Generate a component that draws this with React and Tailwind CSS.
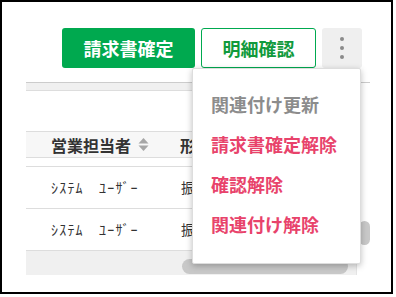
import React from "react";

const jp = { fontFamily: '"Noto Sans CJK JP", "Noto Sans", sans-serif' };

function SortIcon() {
  return (
    <svg width="11" height="15" viewBox="0 0 11 15" className="ml-[7px]">
      <path d="M5.5 1 L10.5 6.5 H0.5 Z" fill="#a6a6a6" />
      <path d="M5.5 14 L10.5 8.5 H0.5 Z" fill="#a6a6a6" />
    </svg>
  );
}

function Row({ name, col2 }) {
  return (
    <div className="h-[42px] flex items-center border-b border-[#dddddd] text-[14px] text-[#333]">
      <div className="w-[154px] pl-[25px] tracking-[1.2px]">{name}</div>
      <div className="pl-[1px]">{col2}</div>
    </div>
  );
}

export default function App() {
  const menu = [
    { label: "関連付け更新", color: "text-[#8c8c8c]" },
    { label: "請求書確定解除", color: "text-[#e8436b]" },
    { label: "確認解除", color: "text-[#e8436b]" },
    { label: "関連付け解除", color: "text-[#e8436b]" },
  ];

  return (
    <div className="w-[396px] h-[297px] bg-white" style={jp}>
      <div className="relative w-[393px] h-[294px] border-2 border-black bg-white">
        {/* toolbar */}
        <div className="flex justify-end gap-[6px] pt-[26px] pr-[29px]">
          <button className="w-[133px] h-[40px] rounded-[3px] bg-[#00a94f] text-white text-[18px] font-bold">
            請求書確定
          </button>
          <button className="w-[115px] h-[40px] rounded-[3px] border border-[#00a94f] bg-white text-[#119a3c] text-[18px] font-bold">
            明細確認
          </button>
          <button className="w-[40px] h-[40px] rounded-[3px] bg-[#efefef] flex flex-col items-center justify-center gap-[5px]">
            <span className="w-[4px] h-[4px] rounded-full bg-[#8a8a8a]" />
            <span className="w-[4px] h-[4px] rounded-full bg-[#8a8a8a]" />
            <span className="w-[4px] h-[4px] rounded-full bg-[#8a8a8a]" />
          </button>
        </div>

        {/* table */}
        <div className="ml-[24px] mt-[14px] w-[344px] border-t border-[#cccccc] flex">
          <div className="flex-1 overflow-hidden">
            <div className="h-[8px] bg-[#f0f0f0] border-b border-[#dddddd]" />
            <div className="h-[41px] border-b border-[#dddddd]" />
            <div className="h-[26px] bg-[#f7f7f7] border-b border-[#dddddd] flex items-center text-[16px] font-bold text-[#333]">
              <div className="w-[154px] pl-[25px] flex items-center">
                営業担当者
                <SortIcon />
              </div>
              <div>形式</div>
            </div>
            <div className="h-[9px] border-b border-[#dddddd]" />
            <Row name="ｼｽﾃﾑ　ﾕｰｻﾞｰ" col2="振込" />
            <Row name="ｼｽﾃﾑ　ﾕｰｻﾞｰ" col2="振込" />
            <div className="h-[24px] bg-[#f0f0f0] pt-[8px] pl-[156px]">
              <div className="w-[166px] h-[15px] rounded-full bg-[#c8c8c8]" />
            </div>
          </div>
          <div className="w-[14px] border-l border-[#e4e4e4] pt-[138px] pl-[2px]">
            <div className="w-[11px] h-[24px] rounded-full bg-[#c8c8c8]" />
          </div>
        </div>

        {/* dropdown menu */}
        <div className="absolute left-[190px] top-[66px] w-[169px] h-[196px] bg-white border border-[#dddddd] rounded-[2px] shadow-[0_2px_6px_rgba(0,0,0,0.25)] pt-[15px] pl-[18px]">
          {menu.map((m) => (
            <div key={m.label} className={`h-[40px] flex items-center text-[18px] font-bold ${m.color}`}>
              {m.label}
            </div>
          ))}
        </div>
      </div>
    </div>
  );
}
